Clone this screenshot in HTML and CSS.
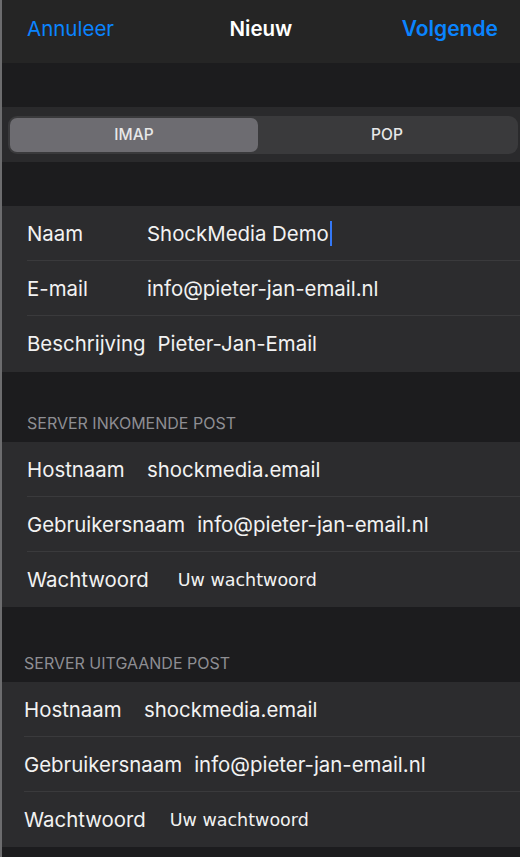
FILE: index.html
```html
<!DOCTYPE html>
<html lang="nl">
<head>
    <meta charset="UTF-8">
    <meta name="viewport" content="width=device-width, initial-scale=1.0">
    <title>Nieuw account</title>
    <link rel="stylesheet" href="styles.css">
</head>
<body>
    <div class="screen">
        <div class="navbar">
            <span class="nav-btn">Annuleer</span>
            <span class="nav-title">Nieuw</span>
            <span class="nav-btn nav-next">Volgende</span>
        </div>

        <div class="gap"></div>

        <div class="segment-band">
            <div class="segment">
                <span class="seg-item active">IMAP</span>
                <span class="seg-item">POP</span>
            </div>
        </div>

        <div class="gap"></div>

        <div class="group first">
            <div class="row">
                <span class="label">Naam</span>
                <span class="value">ShockMedia Demo<span class="cursor"></span></span>
            </div>
            <div class="row">
                <span class="label">E-mail</span>
                <span class="value">info@pieter-jan-email.nl</span>
            </div>
            <div class="row">
                <span class="label">Beschrijving</span>
                <span class="value">Pieter-Jan-Email</span>
            </div>
        </div>

        <div class="section-head">SERVER INKOMENDE POST</div>
        <div class="group">
            <div class="row">
                <span class="label">Hostnaam</span>
                <span class="value">shockmedia.email</span>
            </div>
            <div class="row">
                <span class="label">Gebruikersnaam</span>
                <span class="value">info@pieter-jan-email.nl</span>
            </div>
            <div class="row">
                <span class="label">Wachtwoord</span>
                <span class="value placeholder">Uw wachtwoord</span>
            </div>
        </div>

        <div class="section-head shifted">SERVER UITGAANDE POST</div>
        <div class="group shifted">
            <div class="row">
                <span class="label">Hostnaam</span>
                <span class="value">shockmedia.email</span>
            </div>
            <div class="row">
                <span class="label">Gebruikersnaam</span>
                <span class="value">info@pieter-jan-email.nl</span>
            </div>
            <div class="row">
                <span class="label">Wachtwoord</span>
                <span class="value placeholder pw-out">Uw wachtwoord</span>
            </div>
        </div>
    </div>
</body>
</html>
```

FILE: styles.css
```css
body {
    margin: 0;
    background-color: #1c1c1e;
    font-family: Inter, "Noto Sans", sans-serif;
    color: #f2f2f2;
}
.screen {
    width: 518px;
    height: 857px;
    border-left: 2px solid #6c6c6e;
    background-color: #1c1c1e;
    overflow: hidden;
}
.navbar {
    height: 63px;
    box-sizing: border-box;
    background-color: #252525;
    display: flex;
    align-items: center;
    justify-content: space-between;
    padding: 0 22px 7px 25px;
    font-size: 20.5px;
}
.nav-btn {
    color: #0a84ff;
}
.nav-next {
    font-weight: 600;
    font-size: 21px;
}
.nav-title {
    font-weight: 600;
    color: #fff;
    margin-left: 6px;
}
.gap {
    height: 44px;
}
.segment-band {
    height: 55px;
    background-color: #2a2a2c;
    display: flex;
    align-items: center;
    padding: 0 2px 0 6px;
}
.segment {
    flex: 1;
    display: flex;
    background-color: #3a3a3c;
    border-radius: 9px;
    padding: 2px;
    height: 34px;
}
.seg-item {
    flex: 1;
    display: flex;
    align-items: center;
    justify-content: center;
    font-size: 15.5px;
    font-weight: 500;
    color: #e8e8e8;
}
.seg-item.active {
    flex: 0 0 248px;
    background-color: #6d6c71;
    border-radius: 7px;
}
.group {
    background-color: #2c2c2e;
    padding-left: 25px;
}
.group.first {
    padding-bottom: 1px;
}
.group.shifted {
    padding-left: 22px;
}
.row {
    height: 55px;
    box-sizing: border-box;
    display: flex;
    align-items: center;
    font-size: 20.4px;
    border-bottom: 1px solid #3a3a3c;
}
.row:last-child {
    border-bottom: none;
}
.label {
    min-width: 108px;
    margin-right: 12px;
}
.value {
    display: flex;
    align-items: center;
}
.cursor {
    display: inline-block;
    width: 2px;
    height: 25px;
    background-color: #3478f6;
    margin-left: 1px;
}
.placeholder {
    font-family: "DejaVu Sans", sans-serif;
    font-size: 17.5px;
    padding-left: 17px;
}
.placeholder.pw-out {
    padding-left: 12px;
}
.section-head {
    height: 70px;
    box-sizing: border-box;
    padding: 41px 0 0 25px;
    font-size: 16px;
    color: #8e8e93;
}
.section-head.shifted {
    height: 75px;
    padding-top: 46px;
    padding-left: 22px;
}
```
